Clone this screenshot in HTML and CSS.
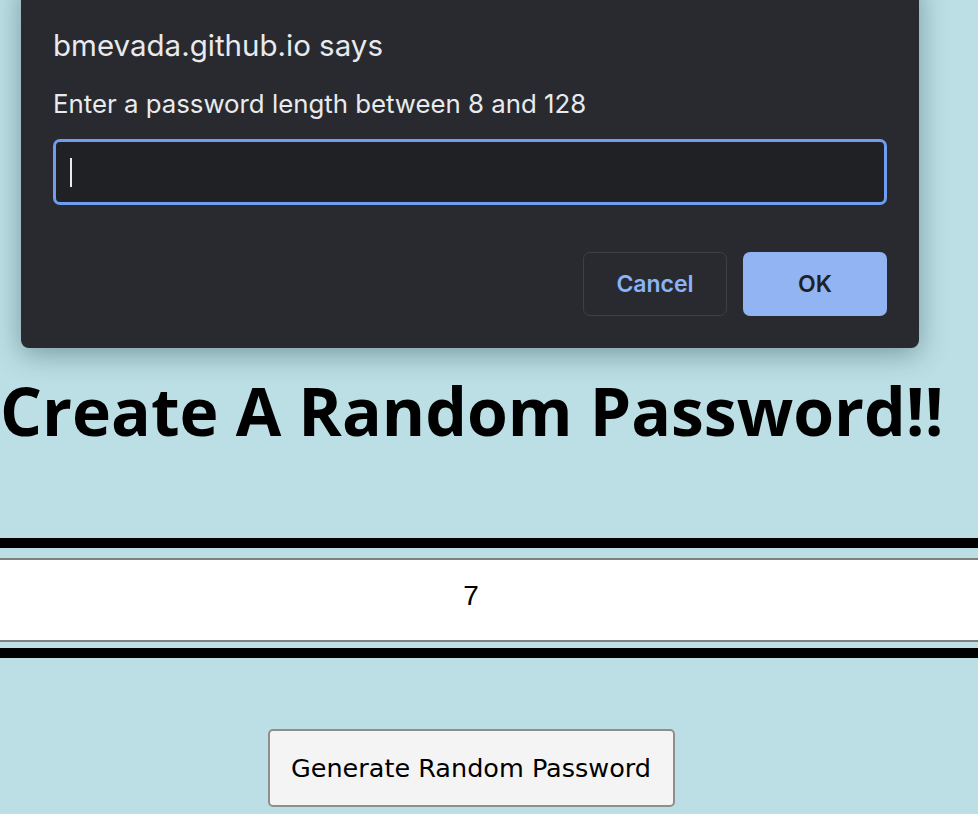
FILE: index.html
```html
<!DOCTYPE html>
<html lang="en">
<head>
<meta charset="utf-8">
<title>Password Generator</title>
<link rel="stylesheet" href="styles.css">
</head>
<body>
<div class="page">
  <h1 class="title">Create A Random Password!!</h1>
  <div class="card">
    <textarea class="output" readonly>7</textarea>
  </div>
  <div class="actions">
    <button class="generate" type="button">Generate Random Password</button>
  </div>
</div>

<div class="dialog" role="dialog">
  <div class="dialog-title">bmevada.github.io says</div>
  <div class="dialog-msg">Enter a password length between 8 and 128</div>
  <div class="dialog-input"><span class="caret"></span></div>
  <div class="dialog-buttons">
    <button class="btn btn-cancel" type="button">Cancel</button>
    <button class="btn btn-ok" type="button">OK</button>
  </div>
</div>
</body>
</html>
```

FILE: styles.css
```css
html, body {
  margin: 0;
  padding: 0;
}
body {
  background: #bbdfe4;
  height: 814px;
  overflow: hidden;
  position: relative;
}
.page {
  width: 942px;
  padding-top: 370px;
}
.title {
  margin: 0;
  font-family: "Open Sans", "DejaVu Sans", sans-serif;
  font-weight: bold;
  font-size: 66px;
  line-height: 80px;
  text-align: center;
  color: #000;
  white-space: nowrap;
}
.card {
  margin-top: 88px;
  width: 978px;
  border-top: 10px solid #000;
  border-bottom: 10px solid #000;
  padding: 10px 0 6px;
}
.output {
  display: block;
  box-sizing: border-box;
  width: 978px;
  height: 84px;
  margin: 0;
  border: none;
  border-top: 2px solid #7f7f7f;
  border-bottom: 2px solid #7f7f7f;
  background: #fff;
  resize: none;
  font-family: "Liberation Sans", Arial, sans-serif;
  font-size: 28px;
  line-height: 32px;
  padding: 20px 36px 0 0;
  text-align: center;
  color: #000;
  overflow: hidden;
}
.actions {
  display: flex;
  justify-content: center;
  padding-top: 71px;
}
.generate {
  box-sizing: border-box;
  width: 407px;
  height: 78px;
  background: #f4f4f4;
  border: 2px solid #8e8e8e;
  border-radius: 5px;
  font-family: "DejaVu Sans", Verdana, sans-serif;
  font-size: 25.5px;
  color: #000;
  padding: 0;
}

/* Browser prompt dialog overlay */
.dialog {
  position: absolute;
  left: 21px;
  top: -20px;
  width: 898px;
  height: 368px;
  box-sizing: border-box;
  background: #292a2f;
  border-radius: 8px;
  box-shadow: 0 6px 28px rgba(40, 70, 80, 0.45);
  padding: 45px 32px 0 32px;
  font-family: Inter, "Noto Sans", sans-serif;
  color: #e8eaed;
}
.dialog-title {
  font-size: 29.5px;
  line-height: 40px;
  height: 40px;
}
.dialog-msg {
  margin-top: 23px;
  font-size: 25.8px;
  line-height: 32px;
}
.dialog-input {
  margin-top: 19px;
  box-sizing: border-box;
  height: 66px;
  width: 834px;
  border: 3px solid #6f9df0;
  border-radius: 7px;
  background: #202125;
  display: flex;
  align-items: center;
  padding-left: 14px;
}
.caret {
  display: block;
  width: 2px;
  height: 29px;
  background: #e8eaed;
}
.dialog-buttons {
  display: flex;
  justify-content: flex-end;
  gap: 16px;
  margin-top: 47px;
  width: 834px;
}
.btn {
  box-sizing: border-box;
  width: 144px;
  height: 64px;
  border-radius: 7px;
  font-family: Inter, "Noto Sans", sans-serif;
  font-size: 23px;
  font-weight: 600;
  padding: 0;
}
.btn-cancel {
  background: #292a2f;
  border: 1px solid #3e3f44;
  color: #8ab4f8;
}
.btn-ok {
  background: #93b4f2;
  border: none;
  color: #202124;
}
```
